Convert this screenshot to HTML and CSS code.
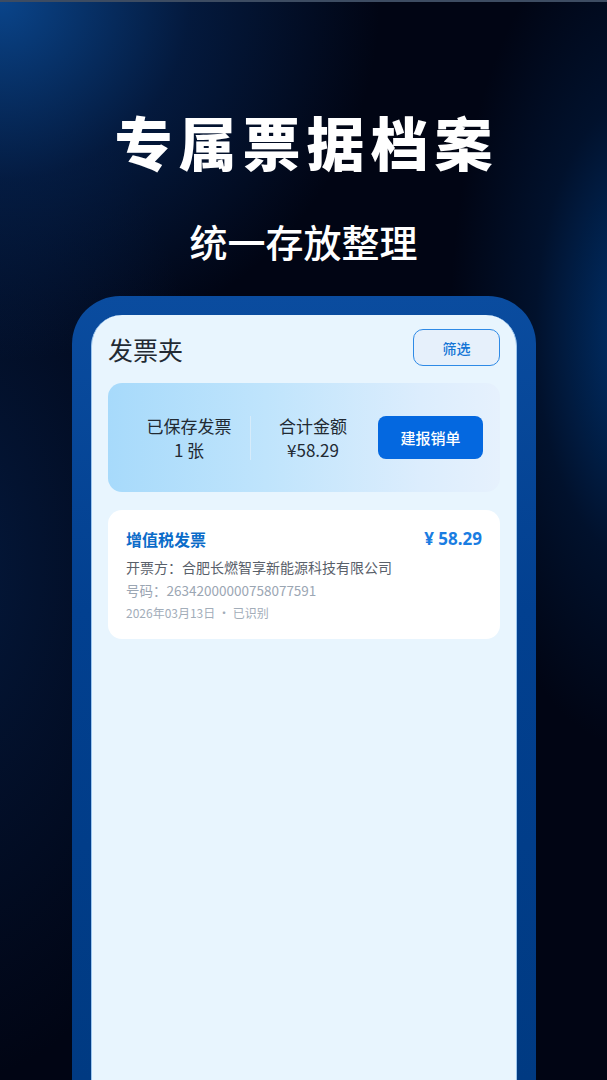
FILE: index.html
```html
<!DOCTYPE html>
<html lang="zh-CN">
<head>
<meta charset="utf-8">
<link rel="stylesheet" href="styles.css">
</head>
<body>
<div class="page">
  <div class="topline"></div>
  <header class="hero">
    <h1 class="hero-title">专属票据档案</h1>
    <p class="hero-sub">统一存放整理</p>
  </header>
  <div class="phone">
    <div class="screen">
      <div class="bar">
        <div class="bar-title">发票夹</div>
        <button class="filter">筛选</button>
      </div>
      <div class="summary">
        <div class="stat">
          <div class="stat-label">已保存发票</div>
          <div class="stat-value">1 张</div>
        </div>
        <div class="divider"></div>
        <div class="stat">
          <div class="stat-label">合计金额</div>
          <div class="stat-value">¥58.29</div>
        </div>
        <button class="cta">建报销单</button>
      </div>
      <div class="invoice">
        <div class="inv-head">
          <span class="inv-type">增值税发票</span>
          <span class="inv-amount">¥ 58.29</span>
        </div>
        <div class="inv-issuer">开票方：合肥长燃智享新能源科技有限公司</div>
        <div class="inv-no">号码：26342000000758077591</div>
        <div class="inv-date">2026年03月13日 · 已识别</div>
      </div>
    </div>
  </div>
</div>
</body>
</html>
```
FILE: styles.css
```css
* { box-sizing: border-box; margin: 0; padding: 0; }
html, body { width: 607px; height: 1080px; overflow: hidden; }
body {
  font-family: "Noto Sans CJK SC", "Noto Sans", sans-serif;
  background: #020616;
}
.page {
  width: 607px;
  height: 1080px;
  overflow: hidden;
  display: flex;
  flex-direction: column;
  background:
    radial-gradient(ellipse 380px 360px at 0px 0px, rgba(10, 72, 145, 0.95), rgba(6, 42, 95, 0.55) 50%, rgba(2, 8, 24, 0) 100%),
    radial-gradient(ellipse 190px 420px at 640px 330px, rgba(0, 60, 130, 0.85), rgba(0, 40, 90, 0.35) 55%, rgba(2, 8, 24, 0) 100%),
    radial-gradient(ellipse 260px 520px at -40px 560px, rgba(5, 32, 75, 0.7), rgba(2, 8, 24, 0) 100%),
    #010514;
}
.topline { height: 2px; background: #3d4c62; flex: none; }
.hero {
  flex: none;
  display: flex;
  flex-direction: column;
  align-items: center;
  color: #fff;
}
.hero-title {
  margin-top: 110px;
  font-size: 58px;
  line-height: 1;
  font-weight: 900;
  letter-spacing: 6px;
  margin-right: -6px;
}
.hero-sub {
  margin-top: 52px;
  font-size: 38px;
  line-height: 1;
  font-weight: 500;
  letter-spacing: 0px;
}
.phone {
  flex: 1;
  margin-top: 36px;
  margin-left: 72px;
  width: 464px;
  border-radius: 48px 48px 0 0;
  background: linear-gradient(180deg, #0a4c9f 0%, #024090 40%, #003a82 100%);
  padding: 19px 19px 0 19px;
}
.screen {
  height: 100%;
  background: #e8f5fe;
  border-radius: 31px 31px 0 0;
  border-left: 1px solid #9cc6ef;
  border-right: 1px solid #9cc6ef;
  padding: 14px 16px 0 16px;
  display: flex;
  flex-direction: column;
}
.bar {
  display: flex;
  justify-content: space-between;
  align-items: center;
  height: 37px;
}
.bar-title {
  font-size: 25px;
  color: #222a33;
  font-weight: 400;
  line-height: 1;
  margin-top: 3px;
}
.filter {
  width: 87px;
  height: 37px;
  border: 1.5px solid #2e8ae6;
  border-radius: 10px;
  background: #e6f0fb;
  color: #1475d6;
  font-family: inherit;
  font-size: 14px;
  font-weight: 500;
}
.summary {
  margin-top: 17px;
  height: 109px;
  border-radius: 14px;
  background: linear-gradient(90deg, #a7dafb 0%, #bfe4fc 40%, #dcedfd 80%, #e6f1fd 100%);
  display: flex;
  align-items: center;
  padding: 0 17px 0 20px;
}
.stat {
  width: 122px;
  display: flex;
  flex-direction: column;
  align-items: center;
  color: #222a33;
  font-size: 17px;
  line-height: 24px;
}
.stat-value { font-size: 17px; }
.divider {
  width: 1px;
  height: 44px;
  background: #d6ebfa;
}
.stat + .divider + .stat { width: 124px; }
.cta {
  margin-left: auto;
  width: 105px;
  height: 43px;
  border: none;
  border-radius: 8px;
  background: #0468e0;
  color: #fff;
  font-family: inherit;
  font-size: 15px;
  font-weight: 500;
}
.invoice {
  margin-top: 18px;
  height: 129px;
  background: #fff;
  border-radius: 14px;
  padding: 18px 18px 0 18px;
}
.inv-head {
  display: flex;
  justify-content: space-between;
  align-items: center;
  line-height: 22px;
}
.inv-type {
  font-size: 16px;
  font-weight: 700;
  color: #0b6cc9;
}
.inv-amount {
  font-family: "Noto Sans", sans-serif;
  font-size: 17px;
  font-weight: 700;
  color: #1a7de2;
}
.inv-issuer {
  margin-top: 7px;
  font-size: 14px;
  color: #59606a;
  line-height: 20px;
}
.inv-no {
  margin-top: 3px;
  font-size: 13.5px;
  color: #9ba6b3;
  line-height: 20px;
}
.inv-date {
  margin-top: 3px;
  font-size: 12px;
  color: #a2adb9;
  line-height: 20px;
}
```
